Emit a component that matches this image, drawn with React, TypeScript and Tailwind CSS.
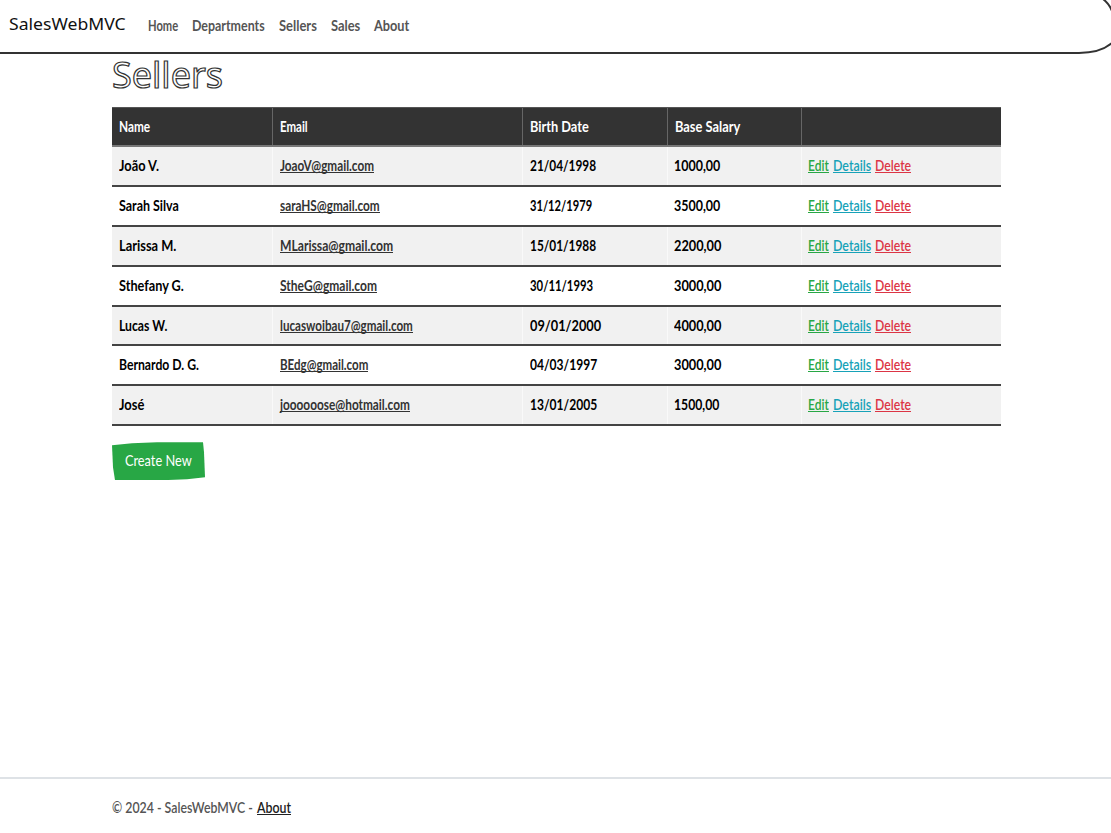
import { useLayoutEffect, useRef, useState } from "react";

type TextProps = { w: number; children: string; className?: string; line?: boolean };

// Condenses its text horizontally so that it fills exactly `w` pixels.
function Condensed({ w, children, className = "", line = false }: TextProps) {
  const ref = useRef<HTMLSpanElement>(null);
  const [scale, setScale] = useState(1);
  useLayoutEffect(() => {
    if (ref.current) setScale(w / ref.current.offsetWidth);
  }, [w, children]);
  return (
    <span className={`inline-block align-top whitespace-nowrap ${line ? "h-[17px] border-b" : "h-[18px]"} ${className}`} style={{ width: w }}>
      <span ref={ref} className="inline-block origin-left align-top" style={{ transform: `scaleX(${scale})` }}>
        {children}
      </span>
    </span>
  );
}

const nav: [string, number][] = [["Home", 30], ["Departments", 73], ["Sellers", 38], ["Sales", 29], ["About", 35]];

const head: [string, number][] = [["Name", 31], ["Email", 28], ["Birth Date", 59], ["Base Salary", 65]];

type Cell = [string, number];
const rows: [Cell, Cell, Cell, Cell][] = [
  [["João V.", 40], ["JoaoV@gmail.com", 94], ["21/04/1998", 66], ["1000,00", 46]],
  [["Sarah Silva", 60], ["saraHS@gmail.com", 100], ["31/12/1979", 62], ["3500,00", 46]],
  [["Larissa M.", 57], ["MLarissa@gmail.com", 113], ["15/01/1988", 66], ["2200,00", 47]],
  [["Sthefany G.", 65], ["StheG@gmail.com", 97], ["30/11/1993", 63], ["3000,00", 47]],
  [["Lucas W.", 48], ["lucaswoibau7@gmail.com", 133], ["09/01/2000", 71], ["4000,00", 47]],
  [["Bernardo D. G.", 80], ["BEdg@gmail.com", 88], ["04/03/1997", 67], ["3000,00", 47]],
  [["José", 25], ["joooooose@hotmail.com", 130], ["13/01/2005", 67], ["1500,00", 45]],
];

const columns = "grid grid-cols-[160.5px_250px_145px_134px_1fr]";

export default function App() {
  return (
    <div className="flex h-[833px] w-full flex-col overflow-hidden bg-white font-['Lato','Noto_Sans',sans-serif] text-[16px] leading-[18px] font-semibold text-black">
      <nav className="relative flex h-[54px] shrink-0 items-start pl-[9px]">
        <a className="mt-[15px] mr-[22px] font-['Noto_Sans',sans-serif] text-[17px] font-normal text-[#111]">
          <Condensed w={117}>SalesWebMVC</Condensed>
        </a>
        <div className="mt-[16px] flex gap-[14px] text-[#555]">
          {nav.map(([label, w]) => (
            <Condensed key={label} w={w} className="font-bold">{label}</Condensed>
          ))}
        </div>
        <svg className="absolute inset-0" width="1111" height="60" fill="none" stroke="#333" strokeWidth="2">
          <path d="M0 53H1079C1094 53 1105 49 1112 43M1103-1C1107 2 1110 6 1112 11" />
        </svg>
      </nav>

      <main className="ml-[112px] w-[889px] grow">
        <h1 className="h-[53px] font-['Noto_Sans',sans-serif] text-[36px] leading-[42px] font-normal text-white [-webkit-text-stroke:1.2px_#333]">
          <Condensed w={111}>Sellers</Condensed>
        </h1>
        <div className={`${columns} h-[40px] border-t border-b-2 border-t-[#555] border-b-[#777] bg-[#333] text-white`}>
          {head.map(([label, w]) => (
            <div key={label} className="border-r border-[#666] pt-[9px] pl-[7px]">
              <Condensed w={w} className="font-bold">{label}</Condensed>
            </div>
          ))}
          <div />
        </div>
        {rows.map(([name, email, date, salary], i) => (
          <div key={name[0]} className={`${columns} h-[39.9px] border-b-2 border-[#444] font-bold ${i % 2 === 0 ? "bg-[#f1f1f1]" : "bg-white"}`}>
            <div className="border-r border-white/60 pt-[9px] pl-[7px]"><Condensed w={name[1]}>{name[0]}</Condensed></div>
            <div className="border-r border-white/60 pt-[9px] pl-[7px] text-[#333]"><Condensed line w={email[1]}>{email[0]}</Condensed></div>
            <div className="border-r border-white/60 pt-[9px] pl-[7px]"><Condensed w={date[1]}>{date[0]}</Condensed></div>
            <div className="border-r border-white/60 pt-[9px] pl-[6.5px]"><Condensed w={salary[1]}>{salary[0]}</Condensed></div>
            <div className="flex gap-[4px] pt-[9px] pl-[6.5px] font-semibold">
              <Condensed line w={21} className="text-[#28a745]">Edit</Condensed>
              <Condensed line w={38} className="text-[#17a2b8]">Details</Condensed>
              <Condensed line w={36} className="text-[#dc3545]">Delete</Condensed>
            </div>
          </div>
        ))}
        <button className="mt-[16px] flex h-[38px] w-[93px] items-start bg-[#28a745] pt-[9px] pl-[13px] font-normal text-white [clip-path:polygon(0_3px,20px_1px,45px_0,91px_0,92px_10px,93px_35px,75px_37px,50px_38px,3px_38px,1px_25px)]">
          <Condensed w={67}>Create New</Condensed>
        </button>
      </main>

      <footer className="flex h-[56px] shrink-0 gap-[4px] border-t-2 border-[#dee2e6] pt-[19px] pl-[112px] text-[#555]">
        <Condensed w={141}>© 2024 - SalesWebMVC -</Condensed>
        <Condensed line w={34} className="text-[#222]">About</Condensed>
      </footer>
    </div>
  );
}
